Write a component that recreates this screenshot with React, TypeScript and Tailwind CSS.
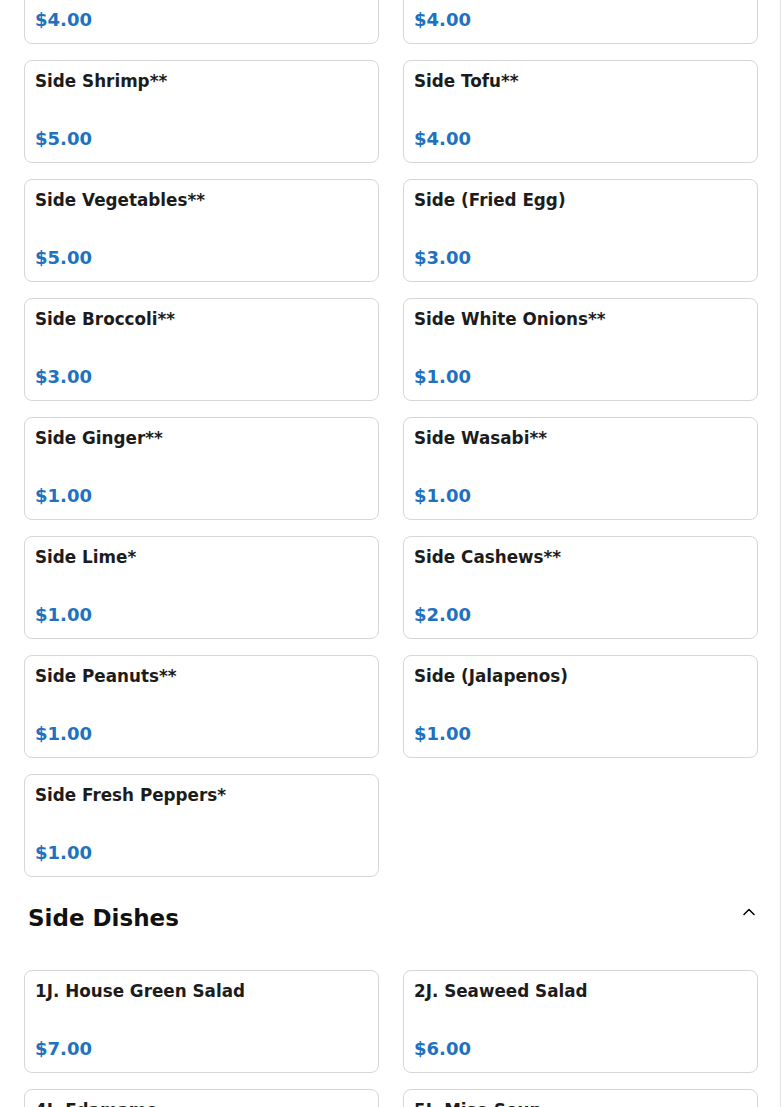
import { ChevronUp } from "lucide-react"

interface MenuItem {
  name: string
  price: string
}

const sides: MenuItem[] = [
  { name: "Side Chicken**", price: "$4.00" },
  { name: "Side Beef**", price: "$4.00" },
  { name: "Side Shrimp**", price: "$5.00" },
  { name: "Side Tofu**", price: "$4.00" },
  { name: "Side Vegetables**", price: "$5.00" },
  { name: "Side (Fried Egg)", price: "$3.00" },
  { name: "Side Broccoli**", price: "$3.00" },
  { name: "Side White Onions**", price: "$1.00" },
  { name: "Side Ginger**", price: "$1.00" },
  { name: "Side Wasabi**", price: "$1.00" },
  { name: "Side Lime*", price: "$1.00" },
  { name: "Side Cashews**", price: "$2.00" },
  { name: "Side Peanuts**", price: "$1.00" },
  { name: "Side (Jalapenos)", price: "$1.00" },
  { name: "Side Fresh Peppers*", price: "$1.00" },
]

const sideDishes: MenuItem[] = [
  { name: "1J. House Green Salad", price: "$7.00" },
  { name: "2J. Seaweed Salad", price: "$6.00" },
  { name: "4J. Edamame", price: "$6.00" },
  { name: "5J. Miso Soup", price: "$4.00" },
]

function ItemCard({ item }: { item: MenuItem }) {
  return (
    <div className="h-[103px] flex flex-col border border-[#d6d6d6] rounded-lg bg-white px-[10px] pt-[11px] pb-[14px] cursor-pointer">
      <div className="text-[16.8px] leading-[19px] font-bold text-[#1c1c1c]">{item.name}</div>
      <div className="mt-auto text-[18px] leading-[19px] font-bold text-[#2071bf]">{item.price}</div>
    </div>
  )
}

export default function App() {
  return (
    <div className="relative h-[1107px] overflow-hidden bg-white">
      {/* thin scroll edge on the right */}
      <div className="absolute top-0 bottom-0 right-[1px] w-px bg-[#e3e3e3]" />
      <div
        className="min-h-[1200px] px-6 -mt-[59px]"
        style={{ fontFamily: '"DejaVu Sans", Verdana, sans-serif' }}
      >
        {/* sides grid */}
        <div className="grid grid-cols-2 gap-x-6 gap-y-4">
          {sides.map((item) => (
            <ItemCard key={item.name} item={item} />
          ))}
        </div>

        {/* section header */}
        <div className="mt-[27px] h-[28px] pl-1 flex items-center justify-between">
          <h2 className="text-[23px] leading-[28px] font-bold text-[#111]">Side Dishes</h2>
          <ChevronUp size={20} strokeWidth={1.8} className="text-black -mr-[1px] -mt-[12px]" />
        </div>

        <div className="mt-[38px] grid grid-cols-2 gap-x-6 gap-y-4">
          {sideDishes.map((item) => (
            <ItemCard key={item.name} item={item} />
          ))}
        </div>
      </div>
    </div>
  )
}
